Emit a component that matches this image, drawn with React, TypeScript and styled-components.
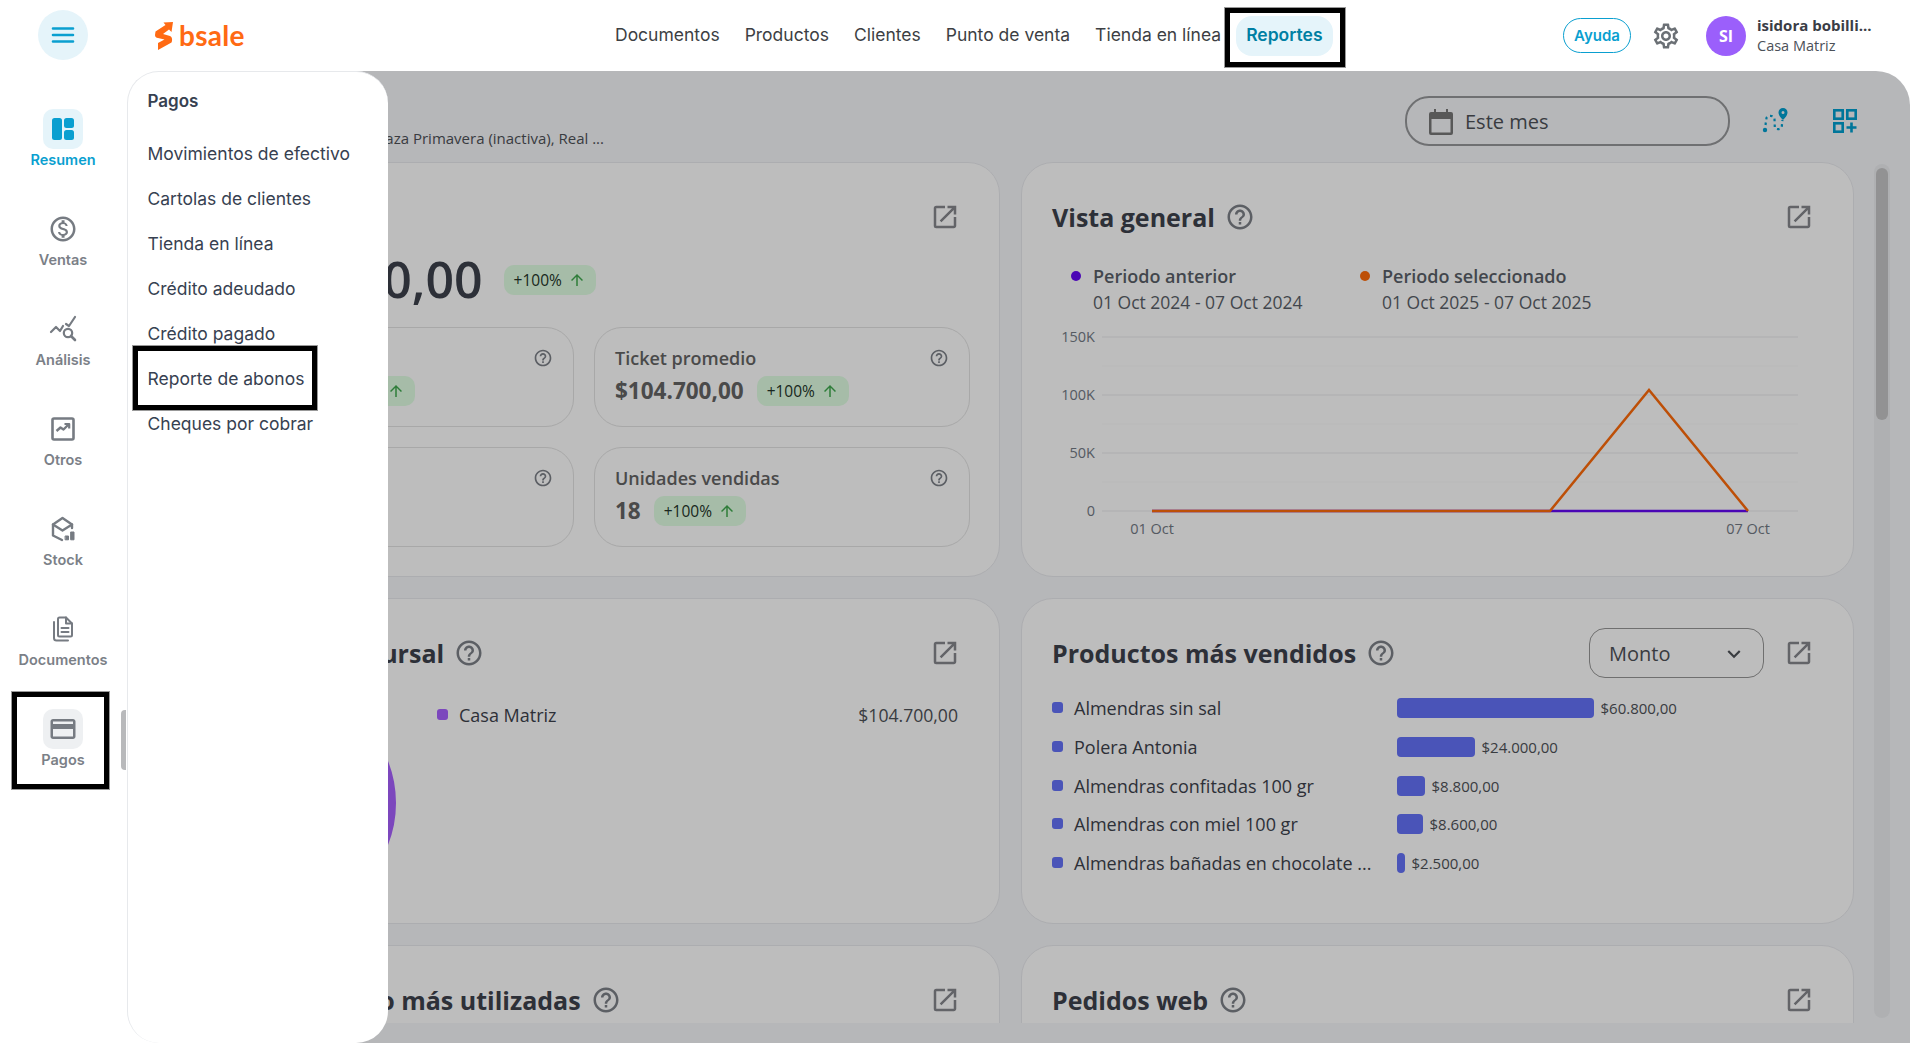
import React from "react";
import styled, { createGlobalStyle } from "styled-components";
import { MdOutlineSettings, MdOutlineMonetizationOn, MdCreditCard, MdOpenInNew, MdHelpOutline, MdArrowUpward, MdKeyboardArrowDown } from "react-icons/md";

const Global = createGlobalStyle`
  html, body { margin: 0; padding: 0; height: 100%; background: #fff; overflow: hidden; }
  #root { height: 100%; }
  *, *::before, *::after { box-sizing: border-box; }
`;

const Shell = styled.div`
  width: 1910px; height: 1043px; display: flex; position: relative; overflow: hidden;
  font-family: "Open Sans", "Liberation Sans", sans-serif; background: #fff;
`;
const Sidebar = styled.aside`
  width: 127px; flex: none; padding: 10px 1px 0 0; display: flex; flex-direction: column; align-items: center; position: relative; z-index: 12;
`;
const MenuButton = styled.button`
  width: 50px; height: 50px; border: 0; border-radius: 50%; background: #e5f4fa; padding: 0; margin-bottom: 49px;
  display: flex; align-items: center; justify-content: center; color: #0a9fd0;
`;
const SideNav = styled.nav`display: flex; flex-direction: column; width: 100%;`;
const Highlighted = `
  position: relative;
  &::after { content: ""; position: absolute; border: 5px solid #000; box-shadow: 0 0 0 1px rgba(0,0,0,.4); pointer-events: none; }
`;
const SideItem = styled.a<{ $active?: boolean; $mark?: boolean }>`
  height: 100px; display: flex; flex-direction: column; align-items: center;
  font: 600 14.5px/20px Inter, sans-serif; color: ${p => (p.$active ? "#0a9fd0" : "#7b8087")};
  ${p => p.$mark ? Highlighted + `&::after { left: 12px; top: -17px; width: 97px; height: 97px; }` : ""}
`;
const SideIcon = styled.span<{ $bg?: string; $color?: string }>`
  width: 40px; height: 40px; border-radius: 10px; margin-bottom: .5px;
  display: flex; align-items: center; justify-content: center;
  background: ${p => p.$bg || "transparent"}; color: ${p => p.$color || "#767b82"};
`;
const SideThumb = styled.i`
  position: absolute; left: 121px; top: 710px; width: 5px; height: 60px; background: #b8b9bb; border-radius: 4px 0 0 4px;
`;

const Right = styled.div`flex: 1; min-width: 0; display: flex; flex-direction: column;`;
const Header = styled.header`height: 71px; flex: none; display: flex; align-items: center; position: relative; z-index: 11;`;
const Logo = styled.div`
  margin-left: 28px; width: 450px; display: flex; align-items: center; gap: 6px; color: #ff6a13;
`;
const LogoWord = styled.span`font: 700 28px/30px Lato, Inter, sans-serif; letter-spacing: .3px; color: #ff6a13; margin-top: -2px;`;
const TopNav = styled.nav`display: flex; gap: 5px; align-items: center;`;
const TopLink = styled.a<{ $active?: boolean }>`
  height: 40px; padding: 0 10px 2px; border-radius: 16px; display: flex; align-items: center; position: relative;
  font: ${p => (p.$active ? 600 : 400)} 17.5px/20px Inter, sans-serif; white-space: nowrap;
  color: ${p => (p.$active ? "#007fa3" : "#3d3f44")}; background: ${p => (p.$active ? "#e5f4fa" : "transparent")};
  ${p => p.$active ? Highlighted + `&::after { left: -11px; top: -8px; width: 120px; height: 59px; }` : ""}
`;
const UserArea = styled.div`margin-left: auto; padding-right: 39px; display: flex; align-items: center;`;
const HelpPill = styled.span`
  width: 68px; height: 35px; border: 1px solid #0a9fd0; border-radius: 18px; color: #0a9fd0;
  display: flex; align-items: center; justify-content: center; font: 600 15px/18px Inter, sans-serif;
`;
const Gear = styled.span`margin: 0 25px 0 20px; color: #6b7075; display: flex;`;
const Avatar = styled.span`
  width: 40px; height: 40px; border-radius: 50%; background: #9b5ffb; color: #fff; margin-right: 11px;
  display: flex; align-items: center; justify-content: center; font: 700 16px/20px "Open Sans", sans-serif;
`;
const UserText = styled.div`width: 114px; white-space: nowrap; display: flex; flex-direction: column; gap: 1px;`;
const UserName = styled.span`font: 700 15px/19px "Open Sans", sans-serif; color: #3a3d46;`;
const UserBranch = styled.span`font: 400 14.5px/19px "Open Sans", sans-serif; color: #4b5058;`;

const Main = styled.main`
  flex: 1; min-height: 0; display: flex; flex-direction: column; background: #f6f7fa; padding: 0 0 20px 7px;
  border-top-right-radius: 34px; position: relative; overflow: hidden; margin-left: 33px;
`;
const Overlay = styled.div`position: absolute; inset: 0; background: rgba(0,0,0,.26); z-index: 5; pointer-events: none;`;
const Toolbar = styled.div`height: 91px; flex: none; display: flex; align-items: flex-start; padding: 25px 53px 0 0;`;
const Subtitle = styled.div`
  width: 437px; margin-top: 32px; text-align: right; white-space: nowrap;
  font: 400 15px/20px "Open Sans", sans-serif; color: #4e5157;
`;
const DatePicker = styled.div`
  margin-left: auto; width: 325px; height: 50px; border: 2px solid #96989a; border-radius: 24px;
  display: flex; align-items: center; gap: 12px; padding: 1px 0 0 22px;
  font: 400 20px/26px "Open Sans", sans-serif; color: #4e5157;
`;
const ToolIcon = styled.span<{ $gap: number }>`
  margin-left: ${p => p.$gap}px; height: 50px; display: flex; align-items: center; color: #009fd0;
`;
const Body = styled.div`flex: 1; min-height: 0; display: flex; gap: 20px; padding-right: 20px; overflow: hidden;`;
const CardGrid = styled.div`
  width: 1687px; flex: none; display: grid; grid-template-columns: 833px 833px; column-gap: 21px;
  grid-template-rows: 415px 326px 326px; row-gap: 21px;
`;
const Rail = styled.div`
  width: 16px; flex: none; margin: 2px 0 5px; border-radius: 8px; background: #eceef1; padding: 4px 2px;
`;
const RailThumb = styled.div`height: 252px; border-radius: 6px; background: #c6c6c7;`;

const Card = styled.section`
  background: #fff; border: 1px solid #e9eaee; border-radius: 32px; padding: 30px 30px 0 30px; min-width: 0;
`;
const CardHead = styled.div`height: 48px; display: flex; align-items: center;`;
const CardTitle = styled.h2`
  margin: 0; font: 700 25px/34px "Open Sans", sans-serif; color: #3d424c; white-space: nowrap;
`;
const Help = styled.span<{ $size: number; $gap?: number }>`
  display: flex; margin-left: ${p => p.$gap ?? 10}px; color: #7c8088; font-size: ${p => p.$size}px;
`;
const Expand = styled.span`margin-left: auto; margin-right: 9px; display: flex; color: #86878d; font-size: 30px;`;

const ValueRow = styled.div`display: flex; align-items: center; height: 60px; margin-top: 8px; white-space: nowrap; justify-content: flex-start;`;
const BigValue = styled.span`font: 600 50px/60px "Open Sans", sans-serif; color: #3d424c;`;
const Badge = styled.span`
  height: 30px; padding: 0 10px; border-radius: 10px; background: #e0fee3; display: inline-flex; align-items: center; gap: 6px;
  margin-left: 13px; flex: none; font: 400 15.5px/20px "Open Sans", sans-serif; color: #25352a;
  svg { color: #3fa94e; font-size: 18px; }
`;
const BigBadge = styled(Badge)`margin: 2px 0 0 21px;`;
const SubGrid = styled.div`margin-top: 18px; display: grid; grid-template-columns: 376px 376px; gap: 20px;`;
const SubCard = styled.div`
  height: 100px; border: 1px solid #e3e3e3; border-radius: 28px; padding: 19px 20px 0;
`;
const SubHead = styled.div`
  height: 22px; display: flex; align-items: center; justify-content: space-between;
  font: 600 18px/22px "Open Sans", sans-serif; color: #646464;
`;
const SubBody = styled.div<{ $end?: boolean }>`
  margin-top: 7px; height: 30px; display: flex; align-items: center; justify-content: ${p => (p.$end ? "flex-end" : "flex-start")};
  width: ${p => (p.$end ? "196px" : "auto")};
`;
const SubValue = styled.span`font: 700 22.5px/30px "Open Sans", sans-serif; color: #646464;`;

const Legend = styled.div`display: flex; margin-top: 22px; padding-left: 19px;`;
const LegendItem = styled.div`width: 289px; display: grid; grid-template-columns: 10px auto; column-gap: 12px; justify-content: start; align-items: center;`;
const Dot = styled.i<{ $color: string }>`width: 10px; height: 10px; border-radius: 50%; background: ${p => p.$color};`;
const LegendName = styled.span`font: 600 18px/26px "Open Sans", sans-serif; color: #5a5f68;`;
const LegendDate = styled.span`grid-column: 2; font: 400 17.5px/26px "Open Sans", sans-serif; color: #5a5f68;`;
const Chart = styled.svg`
  display: block; margin-top: 10px; font-family: "Open Sans", sans-serif; font-size: 14.5px; fill: #737a85;
`;

const SelectBox = styled.div`
  width: 175px; height: 50px; margin-left: auto; border: 1px solid #969696; border-radius: 16px; padding: 1px 16px 0 19px;
  display: flex; align-items: center; justify-content: space-between;
  font: 400 20px/26px "Open Sans", sans-serif; color: #4e5157; svg { font-size: 26px; }
`;
const ExpandNear = styled(Expand)`margin-left: 20px;`;
const BarList = styled.div`margin-top: 12px;`;
const BarRow = styled.div`height: 38.7px; display: grid; grid-template-columns: 345px 1fr; align-items: center;`;
const BarLabel = styled.div`display: flex; align-items: center; gap: 11px; font: 500 18px/24px "Open Sans", sans-serif; color: #3d424c; white-space: nowrap;`;
const Square = styled.i<{ $color: string }>`width: 11px; height: 11px; border-radius: 3px; flex: none; background: ${p => p.$color}; margin-top: -1px;`;
const BarCell = styled.div`display: flex; align-items: center; gap: 6.5px; font: 400 15px/20px "Open Sans", sans-serif; color: #4e5157;`;
const Bar = styled.i`display: block; height: 20px; border-radius: 4px; background: #6472f8;`;

const BranchBody = styled.div`display: flex; margin-top: 0;`;
const Donut = styled.svg`flex: none; margin: 11px 41px 0 -32px;`;
const BranchRow = styled.div`
  flex: 1; margin: 26px 11px 0 0; height: 24px; display: flex; align-items: center; gap: 11px;
  font: 500 18px/24px "Open Sans", sans-serif; color: #3d424c;
`;
const BranchAmount = styled.span`margin-left: auto; font-weight: 400; font-size: 17.6px; color: #4e5157;`;

const Panel = styled.aside`
  position: absolute; left: 127px; top: 71px; width: 261px; bottom: 0; background: #fff; z-index: 10;
  border-left: 1px solid #e7e9ec; border-top: 1px solid #e7e9ec; border-radius: 32px; padding: 15px 0 0 19.5px;
  font-family: Inter, sans-serif; color: #374151;
`;
const PanelTitle = styled.h3`margin: 0 0 16px; font: 600 17px/28px Inter, sans-serif; color: #374151;`;
const PanelLink = styled.a<{ $mark?: boolean }>`
  display: block; height: 45px; font: 400 17.5px/45px Inter, sans-serif; color: #374151; white-space: nowrap;
  ${p => p.$mark ? Highlighted + `&::after { left: -14.5px; top: -10px; width: 184px; height: 64px; }` : ""}
`;

const Menu = () => (
  <svg width="24" height="18" viewBox="0 0 24 18"><g stroke="currentColor" strokeWidth="2.6" strokeLinecap="round"><path d="M2 2.5h20M2 9h20M2 15.5h20" /></g></svg>
);
const ResumenIcon = () => (
  <svg width="24" height="24" viewBox="0 0 24 24" fill="currentColor"><rect x="1" y="1" width="10" height="22" rx="2.5" /><rect x="13" y="1" width="10" height="10" rx="2.5" /><rect x="13" y="13" width="10" height="10" rx="2.5" /></svg>
);
const AnalysisIcon = () => (
  <svg width="28" height="28" viewBox="0 0 28 28" fill="none" stroke="currentColor" strokeWidth="2.2" strokeLinecap="round" strokeLinejoin="round"><path d="M2 17l5-5 4 4 3-5" /><path d="M17 9l3 2 6-9" /><circle cx="19" cy="18" r="4.2" /><path d="M22 21l4 4" strokeWidth="2.6" /></svg>
);
const OtrosIcon = () => (
  <svg width="24" height="24" viewBox="0 0 24 24" fill="none" stroke="currentColor" strokeLinejoin="round"><rect x="1.5" y="1.5" width="21" height="21" rx="1.5" strokeWidth="2.6" /><path d="M5.5 14l4-3.5 3 2 5-5" strokeWidth="2.4" /><path d="M13.500 7h4.700v4.600" strokeWidth="2.200" /></svg>
);
const StockIcon = () => (
  <svg width="26" height="26" viewBox="0 0 26 26" fill="none" stroke="currentColor" strokeWidth="2.4" strokeLinejoin="round" strokeLinecap="round"><path d="M12 24l-9-4.500V8.500L12.500 2 22 8.500V12" /><path d="M3 8.500l9.500 6 9.500-6" /><rect x="15.500" y="20" width="3" height="3.800" fill="currentColor" strokeWidth="1" /><rect x="21" y="16" width="3" height="7.800" fill="currentColor" strokeWidth="1" /></svg>
);
const DocsIcon = () => (
  <svg width="22" height="26" viewBox="0 0 22 26" fill="none" stroke="currentColor" strokeWidth="2" strokeLinejoin="round" strokeLinecap="round"><path d="M2 6v16c0 1.500 1 2.500 2.500 2.500H16" /><path d="M7.500 1.500H14l6 6V19c0 .8-.7 1.500-1.500 1.500h-11C6.700 20.500 6 19.800 6 19V3c0-.8.7-1.500 1.500-1.500z" /><path d="M14 1.500V7.500h6" /><path d="M9.500 12h7M9.500 16h7" /></svg>
);
const CalendarIcon = () => (
  <svg width="24" height="26" viewBox="0 0 24 26" fill="#777"><path fillRule="evenodd" d="M5 0h2v3h10V0h2v3h3a2 2 0 0 1 2 2v19a2 2 0 0 1-2 2H2a2 2 0 0 1-2-2V5a2 2 0 0 1 2-2h3V0zM2.500 10v13.500h19V10h-19z" /></svg>
);
const RouteIcon = () => (
  <svg width="28" height="26" viewBox="0 0 28 26" fill="none" color="#009fd0"><circle cx="4" cy="22" r="2.200" fill="currentColor" /><path d="M4.500 17l1-7c.6-3 8-3 8 1l.3 8c.3 3 7 3 7-1l.7-6" stroke="currentColor" strokeWidth="2.200" strokeDasharray="2.500 3.200" /><path fillRule="evenodd" fill="currentColor" d="M22 0a4.500 4.500 0 0 1 4.500 4.500C26.500 8 22 12 22 12s-4.500-4-4.500-7.500A4.500 4.500 0 0 1 22 0zm0 3a1.500 1.500 0 1 0 0 3 1.500 1.500 0 0 0 0-3z" /></svg>
);
const GridPlusIcon = () => (
  <svg width="24" height="24" viewBox="0 0 24 24" fill="none" stroke="#009fd0" strokeWidth="2.600"><rect x="1.300" y="1.300" width="8.400" height="8.400" /><rect x="14.300" y="1.300" width="8.400" height="8.400" /><rect x="1.300" y="14.300" width="8.400" height="8.400" /><path d="M18.500 13.500v10M13.500 18.500h10" /></svg>
);
const LogoMark = () => (
  <svg width="18" height="28" viewBox="0 0 18 28" fill="currentColor"><path d="M.5 9.500L10.500 3 8.500 .5 18 0 16.500 10 14 7.500 8 12 15 14Q17.500 15 17 19L16.500 20.500 3 28 3 21 9.500 17.500 3 16Q0 15.500 0 13Z" /></svg>
);

const PlusBadge = () => <>+100% <MdArrowUpward /></>;

const bars = [
  { name: "Almendras sin sal", w: 197, v: "$60.800,00" },
  { name: "Polera Antonia", w: 78, v: "$24.000,00" },
  { name: "Almendras confitadas 100 gr", w: 28, v: "$8.800,00" },
  { name: "Almendras con miel 100 gr", w: 26, v: "$8.600,00" },
  { name: "Almendras bañadas en chocolate ...", w: 8, v: "$2.500,00" },
];

const sideItems = [
  { label: "Ventas", icon: <MdOutlineMonetizationOn size={30} /> },
  { label: "Análisis", icon: <AnalysisIcon /> },
  { label: "Otros", icon: <OtrosIcon /> },
  { label: "Stock", icon: <StockIcon /> },
  { label: "Documentos", icon: <DocsIcon /> },
];

const panelLinks = ["Movimientos de efectivo", "Cartolas de clientes", "Tienda en línea", "Crédito adeudado", "Crédito pagado", "Reporte de abonos", "Cheques por cobrar"];

export default function App() {
  return (
    <Shell>
      <Global />
      <Sidebar>
        <MenuButton aria-label="Menú"><Menu /></MenuButton>
        <SideNav>
          <SideItem $active>
            <SideIcon $bg="#e5f4fa" $color="#0a9fd0"><ResumenIcon /></SideIcon>
            Resumen
          </SideItem>
          {sideItems.map(i => (
            <SideItem key={i.label}>
              <SideIcon>{i.icon}</SideIcon>
              {i.label}
            </SideItem>
          ))}
          <SideItem $mark>
            <SideIcon $bg="#eef0f2"><MdCreditCard size={30} /></SideIcon>
            Pagos
          </SideItem>
        </SideNav>
        <SideThumb />
      </Sidebar>
      <Right>
        <Header>
          <Logo><LogoMark /><LogoWord>bsale</LogoWord></Logo>
          <TopNav>
            <TopLink>Documentos</TopLink>
            <TopLink>Productos</TopLink>
            <TopLink>Clientes</TopLink>
            <TopLink>Punto de venta</TopLink>
            <TopLink>Tienda en línea</TopLink>
            <TopLink $active>Reportes</TopLink>
          </TopNav>
          <UserArea>
            <HelpPill>Ayuda</HelpPill>
            <Gear><MdOutlineSettings size={30} /></Gear>
            <Avatar>SI</Avatar>
            <UserText>
              <UserName>isidora bobilli...</UserName>
              <UserBranch>Casa Matriz</UserBranch>
            </UserText>
          </UserArea>
        </Header>
        <Main>
          <Overlay />
          <Toolbar>
            <Subtitle>Plaza Primavera (inactiva), Real ...</Subtitle>
            <DatePicker><CalendarIcon />Este mes</DatePicker>
            <ToolIcon $gap={31}><RouteIcon /></ToolIcon>
            <ToolIcon $gap={44}><GridPlusIcon /></ToolIcon>
          </Toolbar>
          <Body>
            <CardGrid>
              <Card>
                <CardHead><Expand><MdOpenInNew /></Expand></CardHead>
                <ValueRow>
                  <BigValue>$104.700,00</BigValue>
                  <BigBadge><PlusBadge /></BigBadge>
                </ValueRow>
                <SubGrid>
                  <SubCard>
                    <SubHead><span /><Help $size={20} $gap={0}><MdHelpOutline /></Help></SubHead>
                    <SubBody $end><Badge><PlusBadge /></Badge></SubBody>
                  </SubCard>
                  <SubCard>
                    <SubHead>Ticket promedio<Help $size={20} $gap={0}><MdHelpOutline /></Help></SubHead>
                    <SubBody><SubValue>$104.700,00</SubValue><Badge><PlusBadge /></Badge></SubBody>
                  </SubCard>
                  <SubCard>
                    <SubHead><span /><Help $size={20} $gap={0}><MdHelpOutline /></Help></SubHead>
                  </SubCard>
                  <SubCard>
                    <SubHead>Unidades vendidas<Help $size={20} $gap={0}><MdHelpOutline /></Help></SubHead>
                    <SubBody><SubValue>18</SubValue><Badge><PlusBadge /></Badge></SubBody>
                  </SubCard>
                </SubGrid>
              </Card>
              <Card>
                <CardHead>
                  <CardTitle>Vista general</CardTitle>
                  <Help $size={30}><MdHelpOutline /></Help>
                  <Expand><MdOpenInNew /></Expand>
                </CardHead>
                <Legend>
                  <LegendItem>
                    <Dot $color="#6509f5" /><LegendName>Periodo anterior</LegendName>
                    <LegendDate>01 Oct 2024 - 07 Oct 2024</LegendDate>
                  </LegendItem>
                  <LegendItem>
                    <Dot $color="#ff6b0a" /><LegendName>Periodo seleccionado</LegendName>
                    <LegendDate>01 Oct 2025 - 07 Oct 2025</LegendDate>
                  </LegendItem>
                </Legend>
                <Chart width="772" height="225" viewBox="0 0 772 225">
                  {[12, 70, 128, 186].map(y => <line key={y} x1="50" x2="746" y1={y} y2={y} stroke="#f2f2f3" strokeWidth="1.500" />)}
                  {[41, 99, 157].map(y => <line key={y} x1="50" x2="746" y1={y} y2={y} stroke="#f9f9fa" strokeWidth="1" />)}
                  <text x="43" y="17" textAnchor="end">150K</text>
                  <text x="43" y="75" textAnchor="end">100K</text>
                  <text x="43" y="133" textAnchor="end">50K</text>
                  <text x="43" y="191" textAnchor="end">0</text>
                  <text x="100" y="209" textAnchor="middle">01 Oct</text>
                  <text x="696" y="209" textAnchor="middle">07 Oct</text>
                  <polyline points="100,186 696,186" fill="none" stroke="#6509f5" strokeWidth="2.500" />
                  <polyline points="100,186 498,186 597,65 696,186" fill="none" stroke="#ff6b0a" strokeWidth="2.500" />
                </Chart>
              </Card>
              <Card>
                <CardHead>
                  <CardTitle>Ventas por sucursal</CardTitle>
                  <Help $size={30}><MdHelpOutline /></Help>
                  <Expand><MdOpenInNew /></Expand>
                </CardHead>
                <BranchBody>
                  <Donut width="230" height="230" viewBox="0 0 230 230">
                    <circle cx="115" cy="115" r="93" fill="none" stroke="#a860ff" strokeWidth="44" />
                  </Donut>
                  <BranchRow>
                    <Square $color="#a860ff" />Casa Matriz
                    <BranchAmount>$104.700,00</BranchAmount>
                  </BranchRow>
                </BranchBody>
              </Card>
              <Card>
                <CardHead>
                  <CardTitle>Productos más vendidos</CardTitle>
                  <Help $size={30}><MdHelpOutline /></Help>
                  <SelectBox>Monto<MdKeyboardArrowDown /></SelectBox>
                  <ExpandNear><MdOpenInNew /></ExpandNear>
                </CardHead>
                <BarList>
                  {bars.map(b => (
                    <BarRow key={b.name}>
                      <BarLabel><Square $color="#6472f8" />{b.name}</BarLabel>
                      <BarCell><Bar style={{ width: b.w }} />{b.v}</BarCell>
                    </BarRow>
                  ))}
                </BarList>
              </Card>
              <Card>
                <CardHead>
                  <CardTitle>Formas de pago más utilizadas</CardTitle>
                  <Help $size={30}><MdHelpOutline /></Help>
                  <Expand><MdOpenInNew /></Expand>
                </CardHead>
              </Card>
              <Card>
                <CardHead>
                  <CardTitle>Pedidos web</CardTitle>
                  <Help $size={30}><MdHelpOutline /></Help>
                  <Expand><MdOpenInNew /></Expand>
                </CardHead>
              </Card>
            </CardGrid>
            <Rail><RailThumb /></Rail>
          </Body>
        </Main>
      </Right>
      <Panel>
        <PanelTitle>Pagos</PanelTitle>
        {panelLinks.map(l => <PanelLink key={l} $mark={l === "Reporte de abonos"}>{l}</PanelLink>)}
      </Panel>
    </Shell>
  );
}
